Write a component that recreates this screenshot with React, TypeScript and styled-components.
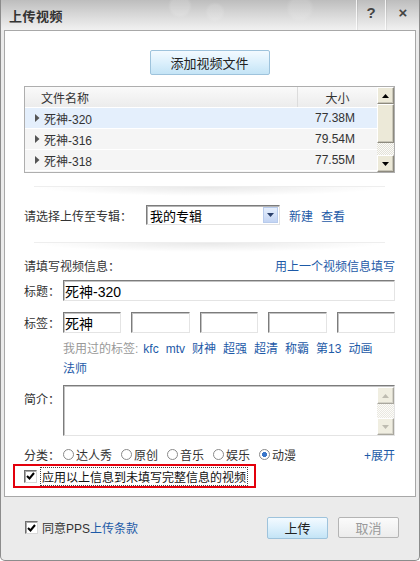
import React from 'react';
import styled, { createGlobalStyle } from 'styled-components';

const GlobalStyle = createGlobalStyle`
  html, body {
    margin: 0;
    padding: 0;
    background: #ffffff;
  }
  body {
    font-family: "Liberation Sans", "Noto Sans CJK SC", sans-serif;
    font-size: 12px;
    color: #222;
  }
`;

const Window = styled.div`
  width: 420px;
  height: 561px;
  box-sizing: border-box;
  display: flex;
  flex-direction: column;
  background: #ebebeb;
  border: 1px solid #8c8c8c;
  border-top: none;
  border-radius: 0 0 5px 5px;
  overflow: hidden;
`;

const TitleBar = styled.div`
  height: 30px;
  flex: none;
  display: flex;
  align-items: stretch;
  margin: 0 -1px;
  background:
    radial-gradient(circle at 180px 6px, rgba(255, 255, 255, 0.15) 0 9px, transparent 12px),
    radial-gradient(circle at 215px 12px, rgba(255, 255, 255, 0.12) 0 7px, transparent 10px),
    radial-gradient(circle at 300px 8px, rgba(255, 255, 255, 0.12) 0 10px, transparent 14px),
    linear-gradient(to bottom, #bdbdbd 0%, #d6d6d6 45%, #f1f1f1 100%);
`;

const Title = styled.div`
  flex: 1;
  padding-left: 9px;
  display: flex;
  align-items: center;
  font-size: 13px;
  font-weight: bold;
  color: #333;
  letter-spacing: 0.5px;
`;

const TitleButton = styled.div<{ $w: number }>`
  width: ${(p) => p.$w}px;
  display: flex;
  align-items: center;
  justify-content: center;
  border-left: 1px solid rgba(255, 255, 255, 0.8);
  box-shadow: inset 1px 0 0 rgba(0, 0, 0, 0.06);
  font-size: 15px;
  font-weight: bold;
  color: #444;
  padding-bottom: 6px;
`;

const Panel = styled.div`
  height: 467px;
  flex: none;
  box-sizing: border-box;
  margin: 0 3px;
  background: #fff;
  border: 1px solid #a8a8a8;
  padding: 19px 20px 0 19px;
  display: flex;
  flex-direction: column;
`;

const Centered = styled.div`
  display: flex;
  justify-content: center;
`;

const BlueButton = styled.div<{ $w: number; $h: number }>`
  width: ${(p) => p.$w}px;
  height: ${(p) => p.$h}px;
  box-sizing: border-box;
  display: flex;
  align-items: center;
  justify-content: center;
  border: 1px solid #9ec3dc;
  border-radius: 2px;
  background: linear-gradient(to bottom, #f3faff 0%, #dcf0fc 50%, #c4e4f6 100%);
  font-size: 13px;
  color: #222;
`;

const GrayButton = styled.div`
  width: 61px;
  height: 21px;
  box-sizing: border-box;
  display: flex;
  align-items: center;
  justify-content: center;
  border: 1px solid #b4b4b4;
  border-radius: 2px;
  background: linear-gradient(to bottom, #fbfbfb 0%, #ececec 100%);
  font-size: 13px;
  color: #9a9a9a;
`;

const FileList = styled.div`
  margin-top: 11px;
  height: 87px;
  box-sizing: border-box;
  border: 1px solid #aeaeae;
  display: flex;
  background: #f6f6f6;
`;

const ListBody = styled.div`
  flex: 1;
  display: flex;
  flex-direction: column;
`;

const ListRow = styled.div<{ $selected?: boolean; $header?: boolean }>`
  height: 21px;
  display: flex;
  align-items: center;
  box-sizing: border-box;
  border-bottom: 1px solid #fff;
  background: ${(p) =>
    p.$header
      ? 'linear-gradient(to bottom, #fafafa, #ececec)'
      : p.$selected
      ? '#e4effc'
      : '#f5f5f5'};
  font-size: 12px;
  color: #333;
`;

const NameCell = styled.div<{ $header?: boolean }>`
  flex: 1;
  display: flex;
  align-items: center;
  padding-left: ${(p) => (p.$header ? 16 : 10)}px;
  gap: 4px;
`;

const SizeCell = styled.div<{ $header?: boolean }>`
  width: 80px;
  align-self: stretch;
  display: flex;
  align-items: center;
  justify-content: ${(p) => (p.$header ? 'center' : 'flex-end')};
  padding-right: ${(p) => (p.$header ? 0 : 22)}px;
  box-sizing: border-box;
  border-left: ${(p) => (p.$header ? '1px solid #dcdcdc' : 'none')};
`;

const Scrollbar = styled.div<{ $disabled?: boolean }>`
  width: 17px;
  flex: none;
  display: flex;
  flex-direction: column;
  background-color: #f4f3ee;
  background-image: repeating-conic-gradient(#e3e1d8 0% 25%, #fbfbf8 0% 50%);
  background-size: 2px 2px;
  opacity: ${(p) => (p.$disabled ? 0.75 : 1)};
`;

const ScrollPart = styled.div<{ $h: number }>`
  height: ${(p) => p.$h}px;
  flex: none;
  box-sizing: border-box;
  background: #ece9d8;
  border: 1px solid;
  border-color: #fff #8d8a7e #8d8a7e #fff;
  box-shadow: inset -1px -1px 0 #c9c6b8;
  display: flex;
  align-items: center;
  justify-content: center;
`;

const Track = styled.div`
  flex: 1;
`;

const Separator = styled.div<{ $mt: number }>`
  margin-top: ${(p) => p.$mt}px;
  height: 9px;
  margin-left: 10px;
  margin-right: 10px;
  border-top: 1px solid #eeeeee;
  background: radial-gradient(ellipse 50% 100% at 50% 0%, rgba(0, 0, 0, 0.09), rgba(0, 0, 0, 0) 100%);
`;

const Row = styled.div<{ $mt: number; $h: number }>`
  margin-top: ${(p) => p.$mt}px;
  height: ${(p) => p.$h}px;
  display: flex;
  align-items: center;
`;

const Label = styled.div<{ $w?: number }>`
  width: ${(p) => (p.$w ? `${p.$w}px` : 'auto')};
  flex: none;
  font-size: 12px;
  color: #333;
`;

const Link = styled.span`
  color: #1d5aa7;
  font-size: 12px;
  cursor: pointer;
`;

const SelectBox = styled.div`
  width: 134px;
  height: 20px;
  box-sizing: border-box;
  margin-left: 14px;
  display: flex;
  align-items: center;
  border: 1px solid;
  border-color: #7c7c7c #e2e2e2 #e2e2e2 #7c7c7c;
  box-shadow: inset 1px 1px 0 #b5b5b5;
  background: #fff;
`;

const SelectText = styled.div`
  flex: 1;
  padding-left: 3px;
  font-size: 13px;
  color: #000;
`;

const SelectArrow = styled.div`
  width: 15px;
  height: 16px;
  margin-right: 1px;
  display: flex;
  align-items: center;
  justify-content: center;
  background: linear-gradient(to bottom, #e6effd, #c3d4f3);
  border: 1px solid #b8cbec;
  box-sizing: border-box;
`;

const Links = styled.div`
  margin-left: 9px;
  display: flex;
  gap: 8px;
`;

const Spacer = styled.div`
  flex: 1;
`;

const TextInput = styled.div`
  flex: 1;
  height: 21px;
  box-sizing: border-box;
  border: 1px solid;
  border-color: #7c7c7c #e4e4e4 #e4e4e4 #7c7c7c;
  box-shadow: inset 1px 1px 0 #c3c3c3;
  background: #fff;
  display: flex;
  align-items: center;
  padding-left: 1px;
  font-size: 14px;
  color: #000;
`;

const TagInputs = styled.div`
  flex: 1;
  display: flex;
  gap: 10px;
`;

const UsedTags = styled.div`
  margin-top: 6px;
  margin-left: 39px;
  line-height: 20px;
  font-size: 12px;
  display: flex;
  flex-wrap: wrap;
  column-gap: 7px;
  max-width: 318px;
`;

const Muted = styled.span`
  color: #999;
  margin-right: -2px;
`;

const IntroRow = styled.div`
  margin-top: 6px;
  display: flex;
  align-items: flex-start;
`;

const IntroLabel = styled(Label)`
  padding-top: 5px;
`;

const TextArea = styled.div`
  flex: 1;
  height: 51px;
  box-sizing: border-box;
  border: 1px solid;
  border-color: #7c7c7c #e4e4e4 #e4e4e4 #7c7c7c;
  box-shadow: inset 1px 1px 0 #c3c3c3;
  display: flex;
  justify-content: flex-end;
  padding: 1px 0 0 0;
`;

const RadioGroup = styled.div`
  display: flex;
  gap: 9px;
`;

const RadioItem = styled.label`
  display: flex;
  align-items: center;
  gap: 2px;
  font-size: 12px;
  color: #333;
`;

const RadioDot = styled.span<{ $on?: boolean }>`
  width: 11px;
  height: 11px;
  box-sizing: border-box;
  border-radius: 50%;
  border: 1px solid #8a8a8a;
  background: ${(p) =>
    p.$on ? 'radial-gradient(circle, #3a76c9 0 2.3px, #fff 2.8px)' : '#fff'};
  display: inline-block;
`;

const RedBox = styled.div`
  margin-top: 1px;
  margin-left: -11px;
  width: 243px;
  height: 24px;
  box-sizing: border-box;
  border: 2px solid #e3000c;
  display: flex;
  align-items: center;
  padding-left: 9px;
  gap: 4px;
`;

const CheckBox = styled.span`
  width: 13px;
  height: 13px;
  box-sizing: border-box;
  flex: none;
  border: 1px solid;
  border-color: #6f6f6f #d8d8d8 #d8d8d8 #6f6f6f;
  box-shadow: inset 1px 1px 0 #a9a9a9;
  background: #fff;
  display: flex;
  align-items: center;
  justify-content: center;
`;

const FocusText = styled.span`
  outline: 1px dotted #444;
  outline-offset: 0;
  font-size: 12px;
  color: #111;
  padding: 0 1px;
`;

const Footer = styled.div`
  flex: 1;
  display: flex;
  align-items: center;
  padding: 0 20px 2px 24px;
  gap: 10px;
`;

const Agree = styled.div`
  flex: 1;
  display: flex;
  align-items: center;
  gap: 4px;
  font-size: 12px;
  color: #333;
`;

const Arrow = ({ dir, color = '#000' }: { dir: 'up' | 'down'; color?: string }) => (
  <svg width="7" height="4" viewBox="0 0 7 4">
    {dir === 'up' ? (
      <polygon points="3.5,0 7,4 0,4" fill={color} />
    ) : (
      <polygon points="0,0 7,0 3.5,4" fill={color} />
    )}
  </svg>
);

const RowArrow = () => (
  <svg width="5" height="8" viewBox="0 0 5 8">
    <polygon points="0,0 4.5,4 0,8" fill="#555" />
  </svg>
);

const Check = () => (
  <svg width="9" height="8" viewBox="0 0 9 8">
    <polyline points="1,4 3.5,6.5 8,1" fill="none" stroke="#000" strokeWidth="2" />
  </svg>
);

const files = [
  { name: '死神-320', size: '77.38M' },
  { name: '死神-316', size: '79.54M' },
  { name: '死神-318', size: '77.55M' },
];

const usedTags = ['kfc', 'mtv', '财神', '超强', '超清', '称霸', '第13', '动画', '法师'];

const categories = ['达人秀', '原创', '音乐', '娱乐', '动漫'];

export default function App() {
  return (
    <>
      <GlobalStyle />
      <Window>
        <TitleBar>
          <Title>上传视频</Title>
          <TitleButton $w={28}>?</TitleButton>
          <TitleButton $w={34}>×</TitleButton>
        </TitleBar>

        <Panel>
          <Centered>
            <BlueButton $w={120} $h={25}>添加视频文件</BlueButton>
          </Centered>

          <FileList>
            <ListBody>
              <ListRow $header>
                <NameCell $header>文件名称</NameCell>
                <SizeCell $header>大小</SizeCell>
              </ListRow>
              {files.map((f, i) => (
                <ListRow key={f.name} $selected={i === 0}>
                  <NameCell>
                    <RowArrow />
                    {f.name}
                  </NameCell>
                  <SizeCell>{f.size}</SizeCell>
                </ListRow>
              ))}
            </ListBody>
            <Scrollbar>
              <ScrollPart $h={17}>
                <Arrow dir="up" />
              </ScrollPart>
              <ScrollPart $h={39} />
              <Track />
              <ScrollPart $h={17}>
                <Arrow dir="down" />
              </ScrollPart>
            </Scrollbar>
          </FileList>

          <Separator $mt={13} />

          <Row $mt={9} $h={20}>
            <Label>请选择上传至专辑：</Label>
            <SelectBox>
              <SelectText>我的专辑</SelectText>
              <SelectArrow>
                <Arrow dir="down" color="#2a3f6a" />
              </SelectArrow>
            </SelectBox>
            <Links>
              <Link>新建</Link>
              <Link>查看</Link>
            </Links>
          </Row>

          <Separator $mt={17} />

          <Row $mt={4} $h={18}>
            <Label>请填写视频信息：</Label>
            <Spacer />
            <Link>用上一个视频信息填写</Link>
          </Row>

          <Row $mt={6} $h={21}>
            <Label $w={39}>标题：</Label>
            <TextInput>死神-320</TextInput>
          </Row>

          <Row $mt={11} $h={21}>
            <Label $w={39}>标签：</Label>
            <TagInputs>
              <TextInput>死神</TextInput>
              <TextInput />
              <TextInput />
              <TextInput />
              <TextInput />
            </TagInputs>
          </Row>

          <UsedTags>
            <Muted>我用过的标签:</Muted>
            {usedTags.map((t) => (
              <Link key={t}>{t}</Link>
            ))}
          </UsedTags>

          <IntroRow>
            <IntroLabel $w={39}>简介：</IntroLabel>
            <TextArea>
              <Scrollbar $disabled>
                <ScrollPart $h={17}>
                  <Arrow dir="up" color="#a9a697" />
                </ScrollPart>
                <Track />
                <ScrollPart $h={17}>
                  <Arrow dir="down" color="#a9a697" />
                </ScrollPart>
              </Scrollbar>
            </TextArea>
          </IntroRow>

          <Row $mt={9} $h={18}>
            <Label $w={39}>分类：</Label>
            <RadioGroup>
              {categories.map((c, i) => (
                <RadioItem key={c}>
                  <RadioDot $on={i === categories.length - 1} />
                  {c}
                </RadioItem>
              ))}
            </RadioGroup>
            <Spacer />
            <Link>+展开</Link>
          </Row>

          <RedBox>
            <CheckBox>
              <Check />
            </CheckBox>
            <FocusText>应用以上信息到未填写完整信息的视频</FocusText>
          </RedBox>
        </Panel>

        <Footer>
          <Agree>
            <CheckBox>
              <Check />
            </CheckBox>
            <span>
              同意PPS<Link>上传条款</Link>
            </span>
          </Agree>
          <BlueButton $w={61} $h={22}>上传</BlueButton>
          <GrayButton>取消</GrayButton>
        </Footer>
      </Window>
    </>
  );
}
